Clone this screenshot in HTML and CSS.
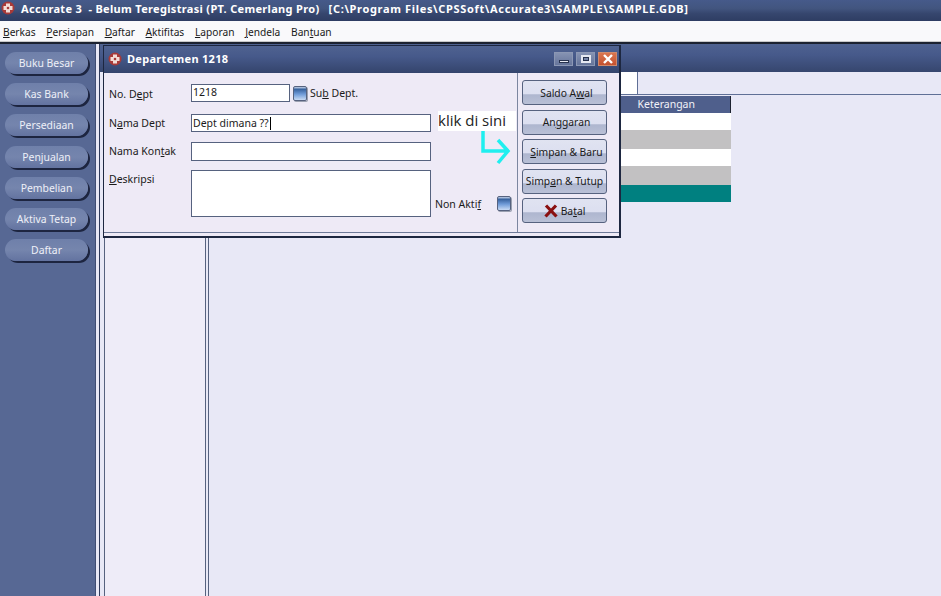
FILE: index.html
```html
<!DOCTYPE html>
<html lang="id">
<head>
<meta charset="utf-8">
<title>Accurate 3</title>
<link rel="stylesheet" href="styles.css">
</head>
<body>
<div class="app">
  <header class="titlebar">
    <svg class="logo" viewBox="0 0 14 14"><circle cx="7" cy="7" r="6.5" fill="#a83a38"/><path d="M5 2.500h4v2.500h2.500v4h-2.500v2.500h-4v-2.500h-2.500v-4h2.500z" fill="#f3dcd6"/><circle cx="7" cy="7" r="1.300" fill="#a83a38"/></svg>
    <span class="app-name">Accurate 3&nbsp; - Belum Teregistrasi (PT. Cemerlang Pro)&nbsp;</span><span class="app-path">[C:\Program Files\CPSSoft\Accurate3\SAMPLE\SAMPLE.GDB]</span>
  </header>
  <nav class="menubar">
    <span><u>B</u>erkas</span><span><u>P</u>ersiapan</span><span><u>D</u>aftar</span><span><u>A</u>ktifitas</span><span><u>L</u>aporan</span><span><u>J</u>endela</span><span>Ban<u>t</u>uan</span>
  </nav>
  <div class="workspace">
    <aside class="sidebar">
      <button class="side-btn">Buku Besar</button>
      <button class="side-btn">Kas Bank</button>
      <button class="side-btn">Persediaan</button>
      <button class="side-btn">Penjualan</button>
      <button class="side-btn">Pembelian</button>
      <button class="side-btn">Aktiva Tetap</button>
      <button class="side-btn">Daftar</button>
    </aside>
    <main class="mdi">
      <div class="mdi-title"></div>
      <div class="mdi-body">
        <div class="tree"></div>
        <div class="list">
          <div class="list-top"><div class="search-box"></div></div>
          <div class="grid">
            <div class="grid-head">Keterangan</div>
            <div class="row row-white"></div>
            <div class="row row-gray"></div>
            <div class="row row-white"></div>
            <div class="row row-gray"></div>
            <div class="row row-teal"></div>
          </div>
        </div>
      </div>
    </main>
  </div>

  <section class="dialog">
    <div class="dlg-title">
      <svg class="logo" viewBox="0 0 14 14"><circle cx="7" cy="7" r="6.5" fill="#a83a38"/><path d="M5 2.500h4v2.500h2.500v4h-2.500v2.500h-4v-2.500h-2.500v-4h2.500z" fill="#f3dcd6"/><circle cx="7" cy="7" r="1.300" fill="#a83a38"/></svg>
      <span class="dlg-name">Departemen 1218</span>
      <div class="win-btns">
        <span class="win-btn"><i class="glyph-min"></i></span>
        <span class="win-btn"><i class="glyph-max"></i></span>
        <span class="win-btn win-close"><svg viewBox="0 0 12 10" width="12" height="10"><path d="M2 1l8 8M10 1l-8 8" stroke="#fff" stroke-width="2.400"/></svg></span>
      </div>
    </div>
    <div class="dlg-body">
      <form class="form">
        <label class="lbl">No. D<u>e</u>pt</label>
        <div class="field-row h18">
          <div class="input input-short">1218</div>
          <span class="check"></span>
          <span class="check-label">Su<u>b</u> Dept.</span>
        </div>
        <label class="lbl lbl-tight">N<u>a</u>ma Dept</label>
        <div class="input input-long h18">Dept dimana ??<span class="caret"></span></div>
        <label class="lbl lbl-tight">Nama Kon<u>t</u>ak</label>
        <div class="input input-long h19"></div>
        <label class="lbl lbl-tight"><u>D</u>eskripsi</label>
        <div class="field-row row-d">
          <div class="input input-area"></div>
          <div class="non-aktif"><span>Non Akti<u>f</u></span><span class="check"></span></div>
        </div>
      </form>
      <div class="actions">
        <button class="act-btn"><span class="act-text">Saldo A<u>w</u>al</span></button>
        <button class="act-btn"><span class="act-text">An<u>g</u>garan</span></button>
        <button class="act-btn"><span class="act-text"><u>S</u>impan &amp; Baru</span></button>
        <button class="act-btn"><span>Simp<u>a</u>n &amp; Tutup</span></button>
        <button class="act-btn"><svg class="x-icon" viewBox="0 0 14 14" width="14" height="14"><path d="M2 1.500l10.500 11M12 1.500l-10.500 11" stroke="#8a1010" stroke-width="3.200"/></svg><span>Ba<u>t</u>al</span></button>
      </div>
    </div>
    <div class="note">klik di sini</div>
    <svg class="arrow" viewBox="0 0 34 36" width="34" height="36"><path d="M3 0v20h25M18 9l10 11-10 12" fill="none" stroke="#1fefef" stroke-width="3.500"/></svg>
  </section>
</div>
</body>
</html>
```
FILE: styles.css
```css
* { box-sizing: border-box; }
html, body { margin: 0; padding: 0; }
body { font-family: "Noto Sans", "DejaVu Sans", sans-serif; font-size: 10.5px; color: #1a1a1a; overflow: hidden; }
u { text-underline-offset: 1px; }
.app { position: relative; width: 941px; height: 596px; display: flex; flex-direction: column; overflow: hidden; background: #e8e8f6; }
.titlebar { height: 21px; display: flex; align-items: center; gap: 6px; padding: 0 0 5px 1px; background: linear-gradient(#465a8a 0, #42557f 40%, #36466e 65%, #2e3d63 100%); color: #fff; font-weight: 700; font-size: 11px; white-space: pre; }
.app-name { letter-spacing: 0.32px; }
.app-path { letter-spacing: 0.66px; }
.logo { width: 14px; height: 14px; flex: none; }
.menubar { height: 23px; display: flex; align-items: center; gap: 10.7px; padding: 1px 0 0 3px; background: #f9f9fb; border-bottom: 2px solid #1c2230; box-shadow: inset 0 -1px #c8c8c8; font-size: 10.2px; }
.workspace { flex: 1; display: flex; min-height: 0; }
.sidebar { width: 96px; flex: none; display: flex; flex-direction: column; gap: 9.2px; padding: 8px 0 0 5px; background: #576894; border-right: 1px solid #3f4d73; }
.side-btn { width: 83px; height: 22px; flex: none; padding: 0; border: 0; border-radius: 11px; font: inherit; font-size: 10.4px; color: #eef0f8; background: linear-gradient(#6f80aa, #7585ad 50%, #6373a0); box-shadow: 2px 2px 0 #1d2540; }
.mdi { flex: 1; min-width: 0; display: flex; flex-direction: column; margin-left: 3px; border-left: 1px solid #2f3b5c; }
.mdi-title { height: 28px; flex: none; background: linear-gradient(#4f6290, #46598a 40%, #36466e); }
.mdi-body { flex: 1; display: flex; min-height: 0; }
.tree { width: 102px; flex: none; margin-left: 4px; background: #eeecf8; border-left: 1px solid #56627f; border-right: 1px solid #56627f; }
.list { flex: 1; margin-left: 2px; border-left: 1px solid #56627f; background: #e8e8f6; }
.list-top { height: 23px; border-bottom: 1px solid #5f6f96; padding-left: 411px; }
.search-box { width: 18px; height: 22px; background: #fff; border-right: 1px solid #5f6f96; }
.grid { width: 522px; margin-top: 1px; }
.grid-head { height: 17px; background: #4f5f8c; color: #f2f2f8; text-align: right; padding-right: 35px; line-height: 16px; border-right: 1px solid #1c2230; }
.row-white { height: 17px; background: #fff; }
.row-gray { height: 19px; background: #c2c1c2; }
.row-teal { height: 17px; background: #008080; }
.dialog { position: absolute; left: 103px; top: 45px; width: 518px; height: 193px; display: flex; flex-direction: column; background: #eeeaf6; border: 1px solid #1d2740; border-width: 1px 2px 2px 1px; }
.dlg-title { height: 27px; flex: none; display: flex; align-items: center; gap: 5px; padding: 0 2px 2px 4px; background: linear-gradient(#4f6290, #46598a 40%, #34446c); color: #fff; }
.dlg-name { font-weight: 700; font-size: 11px; letter-spacing: 0.3px; flex: 1; }
.win-btns { display: flex; gap: 3px; }
.win-btn { width: 19px; height: 14px; display: flex; align-items: center; justify-content: center; background: linear-gradient(#8592b2, #66759b); border: 1px solid #8b97b4; }
.win-close { background: linear-gradient(#d9754f, #c55230); border-color: #d08a6c; }
.glyph-min { width: 10px; height: 3px; margin-top: 5px; background: #e6e9f2; border: 1px solid #27324e; display: block; }
.glyph-max { width: 10px; height: 8px; background: transparent; border: 2px solid #e6e9f2; outline: 1px solid #27324e; outline-offset: -3px; display: block; }
.dlg-body { flex: 1; display: flex; min-height: 0; border-bottom: 1px solid #6e7a98; margin-bottom: 3px; }
.form { width: 414px; flex: none; display: grid; grid-template-columns: 82px 1fr; grid-template-rows: 30px 28px 28px 47px; padding: 11px 0 0 5px; border-right: 1px solid #7c86a0; align-content: start; align-items: start; }
.lbl { font-size: 10.5px; line-height: 20px; }
.lbl-tight { line-height: 18px; }
.h18 { height: 18px; }
.h19 { height: 19px; }
.field-row { display: flex; align-items: center; }
.row-d { align-items: stretch; height: 47px; }
.input { background: #fff; border: 1px solid #56627f; padding: 0 0 0 1px; line-height: 15px; font-size: 10.5px; }
.input-short { width: 99px; height: 18px; }
.input-long { width: 240px; display: flex; align-items: center; }
.input-area { width: 240px; flex: none; }
.caret { width: 1px; height: 13px; background: #000; margin-left: 1px; }
.check { width: 14px; height: 15px; flex: none; border: 1px solid #56627f; border-radius: 2px; background: linear-gradient(#c8d4ea 0, #38639f 18%, #6f9bd8 55%, #c8daf4 100%); box-shadow: 1px 1px 0 #9aa0b0; }
.field-row > .check { margin-left: 3px; }
.check-label { margin-left: 3px; }
.non-aktif { display: flex; align-items: center; justify-content: space-between; width: 76px; height: 15px; margin: 26px 0 0 4px; }
.actions { flex: 1; display: flex; flex-direction: column; padding: 7px 0 0 4px; gap: 4.5px; }
.act-btn { width: 85px; height: 25px; flex: none; padding: 0; border: 1px solid #56627f; border-radius: 3px; font: inherit; font-size: 10.3px; color: #1a1a1a; display: flex; align-items: center; justify-content: center; gap: 3px; white-space: nowrap; background: linear-gradient(#e0e3f1 0, #dcdff0 55%, #aeb6cf 60%, #b9c0d6 100%); }
.act-text { margin-left: 4px; }
.x-icon { flex: none; }
.note { position: absolute; left: 334px; top: 65px; width: 78px; height: 20px; background: #fff; font-family: "Open Sans", "DejaVu Sans", sans-serif; font-size: 15px; line-height: 19px; color: #222; }
.arrow { position: absolute; left: 376px; top: 85px; }
```
